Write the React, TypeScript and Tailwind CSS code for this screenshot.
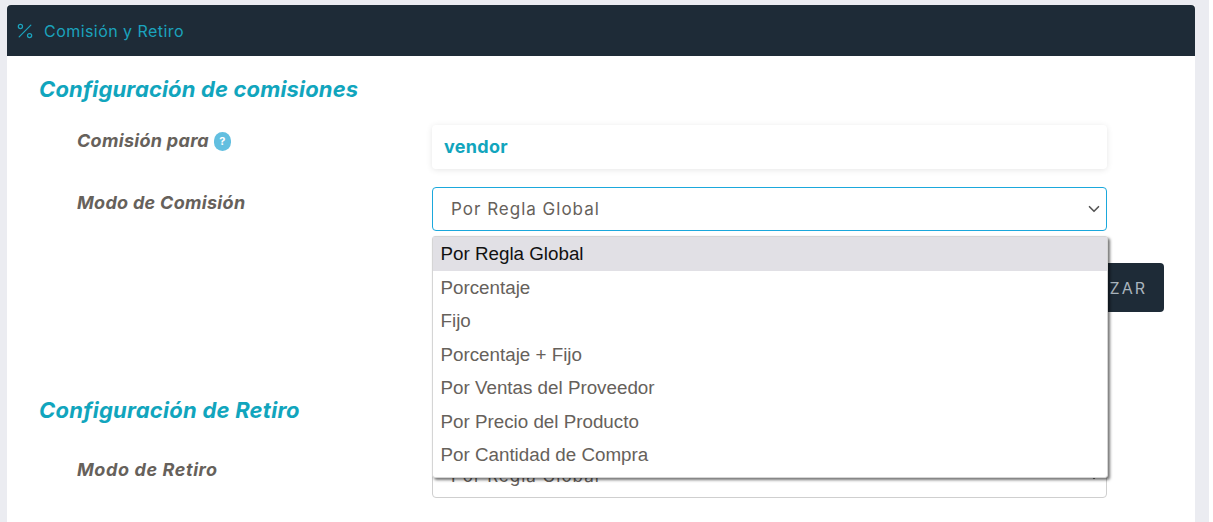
import React from "react";
import { ChevronDown, Percent } from "lucide-react";

const options = ["Por Regla Global","Porcentaje","Fijo","Porcentaje + Fijo","Por Ventas del Proveedor","Por Precio del Producto","Por Cantidad de Compra"];
const font = "font-['Inter','Open_Sans',sans-serif]";

function Label({ children }: { children: React.ReactNode }) {
  return <div className="w-[393px] shrink-0 pl-[38px] text-[18px] font-bold italic leading-[24px] tracking-[0.3px] text-[#66615b]">{children}</div>;
}

export default function App() {
  return (
    <div className={`h-[522px] w-[1213px] overflow-hidden bg-white ${font}`}>
      <div className="h-full w-[1209px] bg-[#ebecf1] pl-[7px] pr-[14px] pt-[5px]">
        <div className="h-full w-[1188px] bg-white">
          <div className="flex h-[51px] items-center gap-[9px] rounded-t-[4px] bg-[#1e2b37] pl-[8px] text-[16px] tracking-[0.45px] text-[#1ba3bd]">
            <Percent size={20} strokeWidth={1.5} />
            <span>Comisión y Retiro</span>
          </div>
          <div className="pl-[32px]">
            <h2 className="pt-[19px] text-[22px] font-bold italic leading-[28px] tracking-[0.15px] text-[#11a5bd]">Configuración de comisiones</h2>
            <div className="mt-[22px] flex">
              <Label>
                <span className="flex items-center gap-[5px] pt-[4px]">Comisión para
                  <span className="flex h-[19px] w-[17px] items-center justify-center rounded-full bg-[#62bfe0] text-[11px] font-bold not-italic text-white">?</span>
                </span>
              </Label>
              <div className="flex h-[44px] w-[675px] items-center rounded-[4px] bg-white pb-[2px] pl-[12px] text-[18px] font-bold tracking-[0.3px] text-[#11a5bd] shadow-[0_1px_6px_rgba(0,0,0,0.1)]">vendor</div>
            </div>
            <div className="relative mt-[18px] flex">
              <Label><span className="block pt-[4px]">Modo de Comisión</span></Label>
              <div className="flex h-[44px] w-[675px] items-center justify-between rounded-[4px] border border-[#1ba8dc] bg-white pl-[18px] pr-[3px] text-[17px] tracking-[1px] text-[#66615b]">
                <span className="pt-[1px]">Por Regla Global</span>
                <ChevronDown size={18} strokeWidth={2.2} className="text-[#555]" />
              </div>
              <ul className="absolute left-[393px] top-[49px] z-10 w-[676px] rounded-[3px] border border-[#d5d5d5] bg-white pb-[5px] font-['Liberation_Sans',Arial,sans-serif] text-[18.8px] leading-[33.5px] text-[#66615b] shadow-[2px_2px_3px_rgba(0,0,0,0.55)]">
                {options.map((o, i) => (
                  <li key={o} className={i === 0 ? "bg-[#e1e0e5] pl-[7.5px] text-[#111]" : "pl-[7.5px]"}>{o}</li>
                ))}
              </ul>
            </div>
            <div className="mt-[32px] flex justify-end pr-[31px]">
              <button className="h-[49px] rounded-[4px] bg-[#1e2b37] px-[17px] text-[16px] tracking-[2px] text-[#a9b4bd]">ACTUALIZAR</button>
            </div>
            <h2 className="mt-[84px] text-[22px] font-bold italic leading-[28px] tracking-[0.25px] text-[#11a5bd]">Configuración de Retiro</h2>
            <div className="mt-[30px] flex">
              <Label><span className="block pt-[4px] tracking-[0.6px]">Modo de Retiro</span></Label>
              <div className="flex h-[44px] w-[675px] items-center justify-between rounded-[4px] border border-[#cfcfcf] bg-white pl-[18px] pr-[3px] text-[17px] tracking-[1px] text-[#66615b]">
                <span className="pt-[1px]">Por Regla Global</span>
                <ChevronDown size={18} strokeWidth={2.2} className="text-[#555]" />
              </div>
            </div>
          </div>
        </div>
      </div>
    </div>
  );
}
